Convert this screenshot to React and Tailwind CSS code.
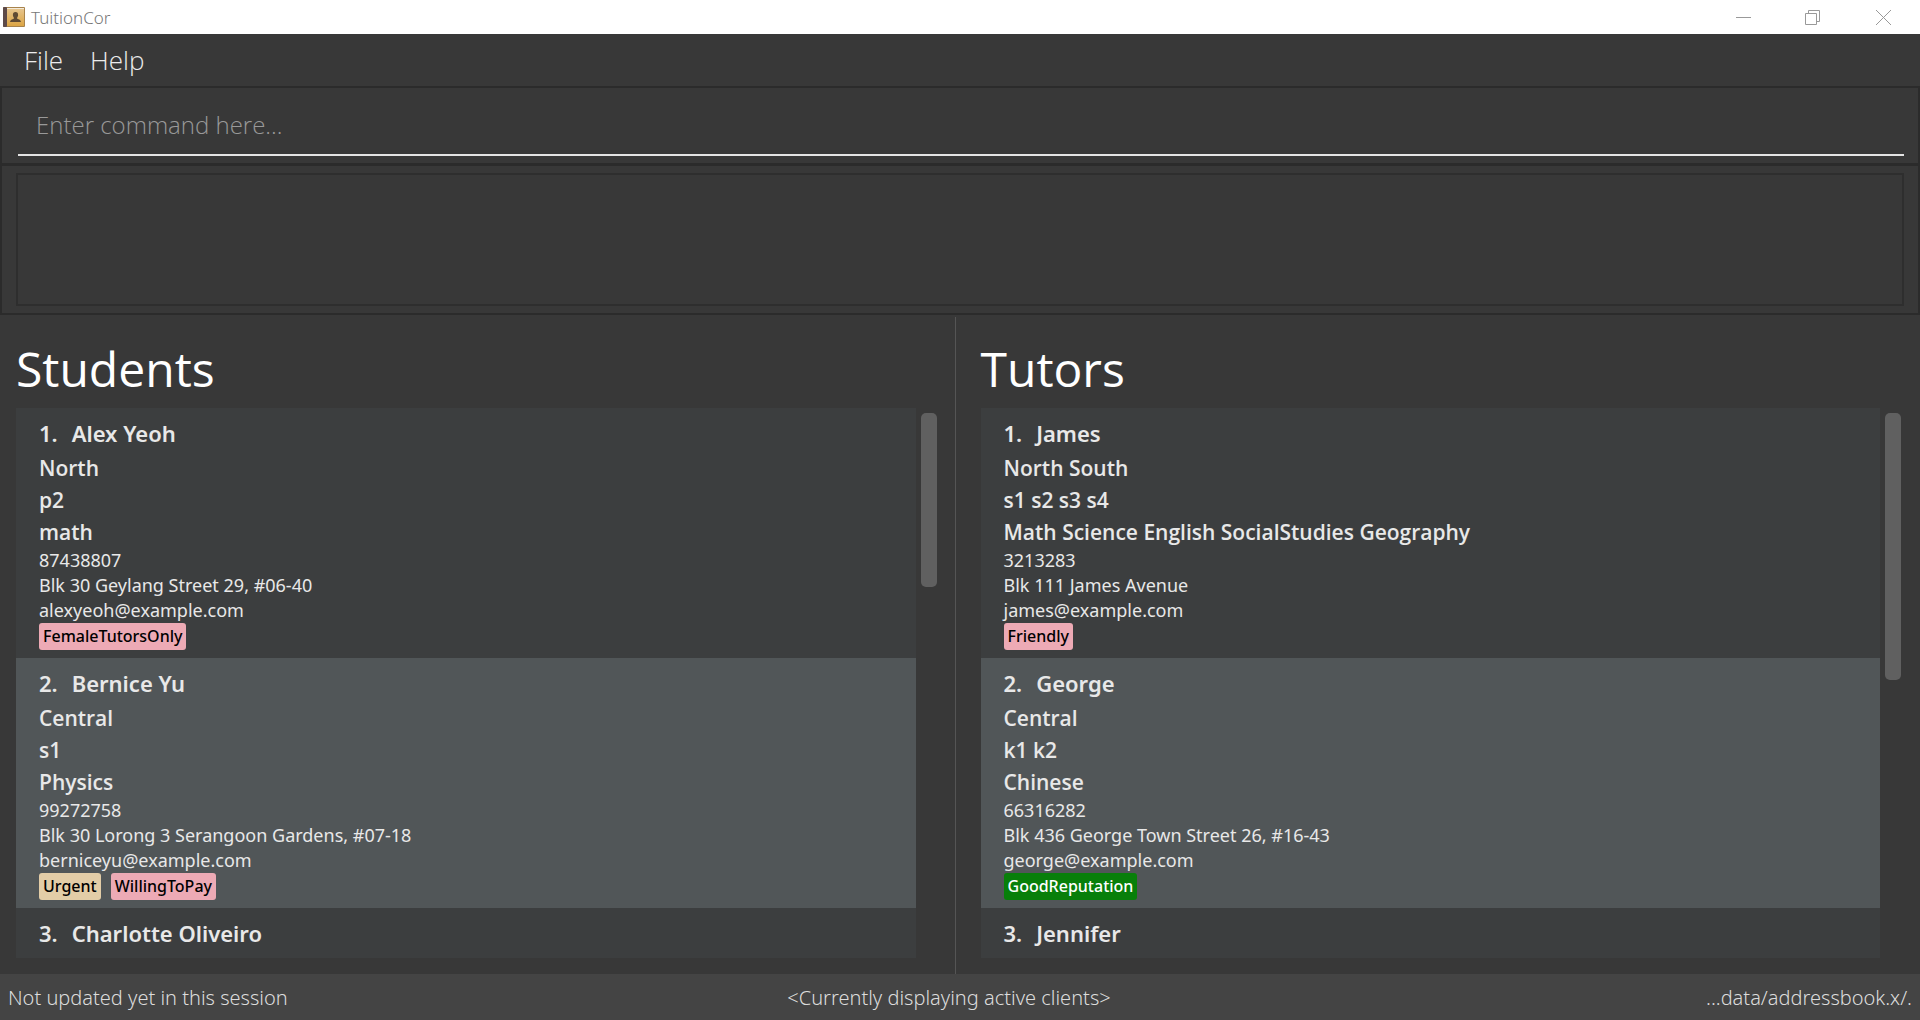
const students = [
  {
    name: 'Alex Yeoh', region: 'North', level: 'p2', subject: 'math', phone: '87438807',
    address: 'Blk 30 Geylang Street 29, #06-40', email: 'alexyeoh@example.com',
    tags: [{ text: 'FemaleTutorsOnly', tone: 'bg-[#edaab5] text-black' }],
  },
  {
    name: 'Bernice Yu', region: 'Central', level: 's1', subject: 'Physics', phone: '99272758',
    address: 'Blk 30 Lorong 3 Serangoon Gardens, #07-18', email: 'berniceyu@example.com',
    tags: [
      { text: 'Urgent', tone: 'bg-[#e3cda7] text-black' },
      { text: 'WillingToPay', tone: 'bg-[#edaab5] text-black' },
    ],
  },
  { name: 'Charlotte Oliveiro' },
];

const tutors = [
  {
    name: 'James', region: 'North South', level: 's1 s2 s3 s4',
    subject: 'Math Science English SocialStudies Geography', phone: '3213283',
    address: 'Blk 111 James Avenue', email: 'james@example.com',
    tags: [{ text: 'Friendly', tone: 'bg-[#edaab5] text-black' }],
  },
  {
    name: 'George', region: 'Central', level: 'k1 k2', subject: 'Chinese', phone: '66316282',
    address: 'Blk 436 George Town Street 26, #16-43', email: 'george@example.com',
    tags: [{ text: 'GoodReputation', tone: 'bg-[#087f0a] text-white' }],
  },
  { name: 'Jennifer' },
];

function BookIcon() {
  return (
    <svg className="h-[22px] w-[22px]" viewBox="0 0 22 22" aria-hidden="true">
      <defs>
        <linearGradient id="cover" x1="0" y1="0" x2="0" y2="1">
          <stop offset="0" stopColor="#e6c48c" />
          <stop offset="1" stopColor="#dca544" />
        </linearGradient>
      </defs>
      <rect x="0" y="1" width="22" height="20" rx="1" fill="#a8834c" />
      <rect x="4" y="2" width="17" height="1" fill="#f3ead9" />
      <rect x="4" y="3" width="17" height="17" fill="url(#cover)" />
      <rect x="0" y="1" width="4" height="20" rx="1" fill="#5d4a48" />
      <path d="M12.500 6c1.800 0 2.700 1.100 2.600 2.900 0 1.300-.5 2-.9 2.600v1.200c1.700.7 3.600 1 3.800 3.300H7c.2-2.300 2.100-2.600 3.800-3.300v-1.200c-.4-.6-.9-1.300-.9-2.600C9.800 7.100 10.700 6 12.500 6z" fill="#5f4a33" />
    </svg>
  );
}

function TitleBar() {
  return (
    <header className="flex h-[34px] shrink-0 items-center bg-white pl-[3px] text-[#999]">
      <BookIcon />
      <h1 className="ml-[6px] flex-1 pt-px text-[17px] font-light text-[#777]">TuitionCor</h1>
      <button type="button" aria-label="Minimize" className="flex h-full w-[69px] items-center justify-center">
        <svg className="h-[15px] w-[15px]" viewBox="0 0 15 15" fill="none" stroke="currentColor"><path d="M0 7.500h15" /></svg>
      </button>
      <button type="button" aria-label="Restore" className="flex h-full w-[69px] items-center justify-center">
        <svg className="h-[15px] w-[15px]" viewBox="0 0 15 15" fill="none" stroke="currentColor"><path d="M.5 3.500h11v11H.5zM3.500 3.500V.5h11v11h-3" /></svg>
      </button>
      <button type="button" aria-label="Close" className="flex h-full w-[73px] items-center justify-center">
        <svg className="h-[15px] w-[15px]" viewBox="0 0 15 15" fill="none" stroke="currentColor"><path d="M0 0l15 15M15 0L0 15" /></svg>
      </button>
    </header>
  );
}

function Card({ person, index }) {
  return (
    <li className="shrink-0 px-[23px] py-2 odd:bg-[#3c3e3f] even:bg-[#515658]">
      <h3 className="mb-[2px] flex gap-[14px] text-[22px] leading-[34px] font-semibold">
        <span>{index}.</span>
        <span>{person.name}</span>
      </h3>
      {person.region && (
        <>
          <div className="font-['Open_Sans',sans-serif] text-[21px] leading-[32px] font-semibold">
            <p>{person.region}</p>
            <p>{person.level}</p>
            <p>{person.subject}</p>
          </div>
          <div className="text-[18px] leading-[25px]">
            <p>{person.phone}</p>
            <p>{person.address}</p>
            <p>{person.email}</p>
          </div>
          <ul className="flex gap-[10px]">
            {person.tags.map((tag) => (
              <li key={tag.text} className={`rounded-[3px] px-1 text-[16px] leading-[27px] font-medium ${tag.tone}`}>{tag.text}</li>
            ))}
          </ul>
        </>
      )}
    </li>
  );
}

function Pane({ title, people, thumb, className }) {
  return (
    <section className={`flex min-w-0 flex-1 flex-col pb-4 ${className}`}>
      <h2 className="pt-[18px] pb-[3px] font-['Open_Sans',sans-serif] text-[48px] leading-[72px] text-white">{title}</h2>
      <div className="flex min-h-0 flex-1 gap-[5px]">
        <ol className="flex min-w-0 flex-1 flex-col overflow-hidden bg-[#3c3e3f] text-[#e8e8e8]">
          {people.map((person, i) => (
            <Card key={person.name} person={person} index={i + 1} />
          ))}
        </ol>
        <div className="w-4 pt-[5px]">
          <div className={`rounded-[5px] bg-[#606060] ${thumb}`} />
        </div>
      </div>
    </section>
  );
}

export default function App() {
  return (
    <div className="flex h-screen flex-col overflow-hidden bg-[#383838] font-['Noto_Sans','Open_Sans',sans-serif]">
      <TitleBar />
      <nav className="flex h-[52px] shrink-0 items-center gap-[27px] px-6 font-['Open_Sans',sans-serif] text-[26px] font-light text-[#ececec]">
        <button type="button">File</button>
        <button type="button">Help</button>
      </nav>
      <div className="shrink-0 border-2 border-[#2b2b2b] pt-[5px] pr-[14px] pb-[7px] pl-4">
        <input
          type="text"
          aria-label="Command"
          placeholder="Enter command here..."
          className="block h-[63px] w-full border-b-2 border-[#e4e4e4] bg-transparent px-[18px] pt-[2px] font-['Open_Sans',sans-serif] text-[24px] font-light text-white outline-none placeholder:text-[#999]"
        />
      </div>
      <div className="shrink-0 border-2 border-t border-[#2b2b2b] px-[14px] py-[7px]">
        <output className="block h-[133px] border-2 border-[#2e2e2e]" />
      </div>
      <main className="flex min-h-0 flex-1">
        <Pane title="Students" people={students} thumb="h-[32%]" className="pr-[18px] pl-4" />
        <div className="mt-[2px] w-3 border-l border-[#555]" />
        <Pane title="Tutors" people={tutors} thumb="h-[49%]" className="pr-[19px] pl-[14px]" />
      </main>
      <footer className="grid h-[46px] shrink-0 grid-cols-3 items-center bg-[#444] px-2 pt-[2px] text-[20px] font-light text-[#dcdcdc]">
        <p>Not updated yet in this session</p>
        <p className="pr-[22px] text-center">&lt;Currently displaying active clients&gt;</p>
        <p className="text-right">...data/addressbook.x/.</p>
      </footer>
    </div>
  );
}
